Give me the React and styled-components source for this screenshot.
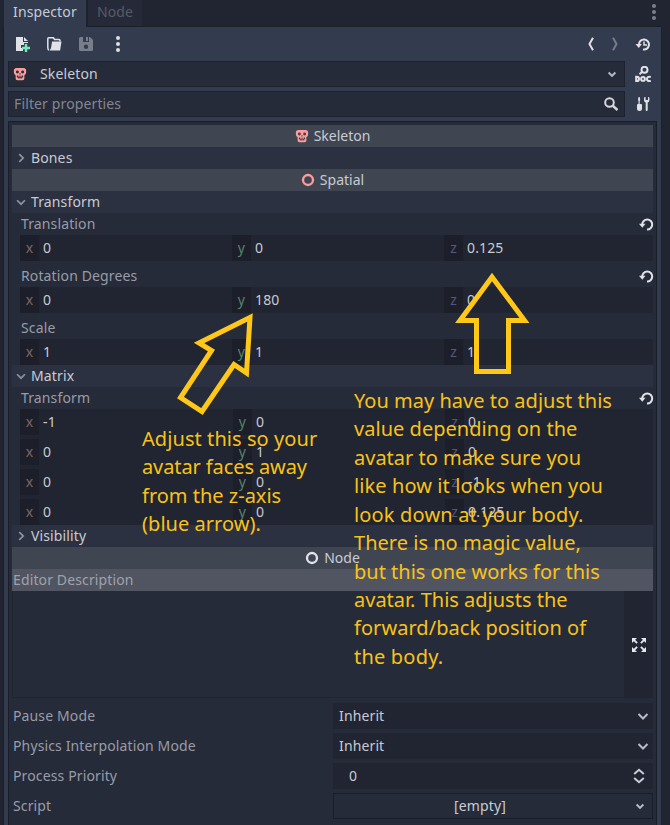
import React from "react";
import styled, { createGlobalStyle } from "styled-components";

const Global = createGlobalStyle`
  * { box-sizing: border-box; }
  body {
    margin: 0;
    background: #212531;
    color: #c8cbd4;
    font: 14px/22px "Noto Sans", "Open Sans", sans-serif;
    letter-spacing: 0.13px;
    overflow: hidden;
  }
`;

const Screen = styled.div`
  position: relative;
  width: 670px;
  height: 825px;
  overflow: hidden;
  display: flex;
  flex-direction: column;
  padding: 0 9px 0 4px;
`;

const TabBar = styled.div`
  display: flex;
  height: 27px;
  flex: none;
  background: linear-gradient(#212531 26px, #1b1f2a 26px);
`;

const Tab = styled.div`
  width: ${(p) => p.$width}px;
  height: ${(p) => (p.$active ? 27 : 26)}px;
  padding: 1px 0 0 9px;
  background: ${(p) => (p.$active ? "#333b4f" : "#262a38")};
  color: ${(p) => (p.$active ? "#c8cbd4" : "#575b67")};
  border-right: ${(p) => (p.$active ? "2px solid #1d212c" : "0")};
`;

const TabMenu = styled.div`
  margin: 0 -1px 0 auto;
  padding-top: 4px;
`;

const Dock = styled.div`
  flex: 1;
  min-height: 0;
  display: flex;
  flex-direction: column;
  background: #333b4f;
  box-shadow: -1px 0 #191d28, 1px 0 #1b202c;
  padding: 0 4px;
`;

const Toolbar = styled.div`
  height: 34px;
  flex: none;
  display: flex;
  align-items: center;
  gap: 16px;
  padding: 0 6px 0 6px;
`;

const Push = styled.div`
  margin-left: auto;
  display: flex;
  align-items: center;
  gap: ${(p) => p.$gap || 0}px;
  margin-right: ${(p) => (p.$gap ? -4 : 0)}px;
`;

const FieldRow = styled.div`
  display: flex;
  height: 26px;
  flex: none;
  margin-bottom: 4px;
`;

const Field = styled.div`
  width: 617px;
  height: 26px;
  display: flex;
  align-items: center;
  padding: 0 ${(p) => p.$right}px 0 ${(p) => (p.$muted ? 5 : 4)}px;
  gap: 13px;
  background: #262b3a;
  border: 1px solid #1e2230;
  color: ${(p) => (p.$muted ? "#838692" : "#c8cbd4")};
`;

const SideIcon = styled.div`
  flex: 1;
  display: flex;
  align-items: center;
  justify-content: center;
  padding-left: 3px;
`;

const Properties = styled.div`
  flex: 1;
  min-height: 0;
  background: #262b3a;
  border: 1px solid #191e29;
  border-bottom: 0;
  padding: 3px 3px 0;
`;

const Category = styled.div`
  height: 22px;
  display: flex;
  justify-content: center;
  align-items: center;
  gap: 5px;
  background: #404552;
  letter-spacing: 0;
`;

const Section = styled.div`
  height: 22px;
  display: flex;
  align-items: center;
  gap: 3px;
  padding-left: 2px;
  background: #2c3141;
`;

const Caption = styled.div`
  height: 22px;
  display: flex;
  justify-content: space-between;
  align-items: center;
  padding: 0 0 0 9px;
  color: #999ca7;
  & > svg { margin-right: -1px; }
`;

const Vector = styled.div`
  height: 26px;
  margin: 0 0 ${(p) => p.$gap}px 8px;
  display: grid;
  grid-template-columns: ${(p) => (p.$wide ? "213px 212px 1fr" : "212px 212px 1fr")};
  background: #212531;
`;

const Matrix = styled.div`
  background: linear-gradient(90deg, transparent 8px, #212531 8px);
  & > *:last-child { margin-bottom: 0; }
`;

const Component = styled.div`
  display: flex;
  align-items: center;
`;

const axisColors = { x: "#806462", y: "#56846c", z: "#55567f" };

const Axis = styled.div`
  width: 19px;
  height: 26px;
  line-height: 26px;
  text-align: center;
  background: #1c1f2a;
  color: ${(p) => axisColors[p.$axis]};
  margin-right: 4px;
`;

const Description = styled.div`
  height: 22px;
  padding-left: 1px;
  background: #515561;
  color: #9fa2ac;
`;

const TextArea = styled.div`
  height: 107px;
  display: flex;
  justify-content: flex-end;
  border: solid #212532;
  border-width: 0 0 1px 1px;
`;

const Expand = styled.div`
  width: 29px;
  padding-top: 2px;
  display: flex;
  align-items: center;
  justify-content: center;
  background: #212531;
`;

const PropertyRow = styled.div`
  height: 26px;
  margin: ${(p) => (p.$first ? 5 : 4)}px 0 0;
  display: grid;
  grid-template-columns: 320px 1fr;
  align-items: center;
  color: #999ca7;
  padding-left: 1px;
`;

const Control = styled.div`
  height: 26px;
  display: flex;
  align-items: center;
  justify-content: space-between;
  padding: 0 ${(p) => p.$right}px 0 ${(p) => p.$left}px;
  background: ${(p) => (p.$outlined ? "#262b3a" : "#212531")};
  border: ${(p) => (p.$outlined ? "1px solid #191d29" : "0")};
  color: #c8cbd4;
`;

const Centered = styled.span`
  flex: 1;
  text-align: center;
  padding-right: 8px;
`;

const Note = styled.div`
  position: absolute;
  left: ${(p) => p.$x}px;
  top: ${(p) => p.$y}px;
  color: #f8c21b;
  font-size: 20px;
  line-height: 28.42px;
  letter-spacing: 0;
  white-space: nowrap;
`;

const NoteLine = styled.div`
  letter-spacing: ${(p) => p.$track || 0}px;
`;

const Arrows = styled.svg`
  position: absolute;
  inset: 0;
  pointer-events: none;
`;

const Svg = styled.svg`
  display: block;
  flex: none;
`;

const Icon = ({ size = 16, children, ...rest }) => (
  <Svg width={size} height={size} viewBox="0 0 16 16" fill="none" {...rest}>
    {children}
  </Svg>
);

const Dots = ({ color = "#e0e0e3" }) => (
  <Icon fill={color}>
    <circle cx="8" cy="2" r="2" />
    <circle cx="8" cy="8" r="2" />
    <circle cx="8" cy="14" r="2" />
  </Icon>
);

const NewFile = () => (
  <Icon>
    <path d="M2 1v14h7v-3H7V9h3V7h4V6H9V1zm8 0v4h4z" fill="#e0e2e8" />
    <path d="M10.800 8h2.400v2.800H16v2.400h-2.800V16h-2.400v-2.800H8v-2.400h2.800z" fill="#77e9b8" />
  </Icon>
);

const Folder = () => (
  <Icon>
    <path d="M14 5.500V4.500q0-1-1-1H8.500l-1-1.700H2.800q-1 0-1 1V11.500q0 2 1.200 2.500" stroke="#e0e2e8" strokeWidth="1.500" />
    <path d="M6 5.500h9.500l-1.400 9H3.400Q5 13.500 5.200 11z" fill="#e0e2e8" />
  </Icon>
);

const Save = () => (
  <Icon>
    <path fillRule="evenodd" d="M2.500 1H5v5h6V1h1l3 3v9.500q0 1.500-1.500 1.500h-11Q1 15 1 13.500v-11Q1 1 2.500 1zM8 8.500a2.200 2.200 0 1 0 0 4.400 2.200 2.200 0 0 0 0-4.400z" fill="#797e8b" />
    <path d="M8 1h2v4H8z" fill="#797e8b" />
  </Icon>
);

const Skull = () => (
  <Icon size={14}>
    <path fillRule="evenodd" fill="#fc9c9c" d="M4 1h8q3 0 3 3v2q0 3-2 3.500V13q0 2-2 2H5q-2 0-2-2V9.500Q1 9 1 6V4q0-3 3-3zM5 4a1.700 1.700 0 1 0 0 3.400A1.700 1.700 0 0 0 5 4zm6 0a1.700 1.700 0 1 0 0 3.400A1.700 1.700 0 0 0 11 4zM7.300 7v1.500h1.400V7zM4.500 9.700V12H6v1h1.500v-1h1v1H10v-1h1.500V9.700H10V11H8.500V9.700h-1V11H6V9.700z" />
  </Icon>
);

const Ring = ({ color }) => (
  <Icon size={14}>
    <circle cx="8" cy="8" r="5.700" stroke={color} strokeWidth="2.700" />
  </Icon>
);

const Chevron = ({ dir = "down", size = 12, color = "#b9bcc6", weight = 2 }) => {
  const d = {
    down: "M3.500 6l4.500 4.500L12.500 6",
    right: "M6 3.500L10.500 8 6 12.500",
    tallLeft: "M10 1.800L6.500 8l3.500 6.200",
    tallRight: "M6 1.800L9.500 8 6 14.200",
  }[dir];
  return (
    <Icon size={size} stroke={color} strokeWidth={weight}>
      <path d={d} />
    </Icon>
  );
};

const History = () => (
  <Icon>
    <path d="M4 8.500a5 5 0 1 1 4 4.900" stroke="#e0e2e8" strokeWidth="2" />
    <path d="M.500 8h6.400l-3.200 4z" fill="#e0e2e8" />
    <path d="M9 5.500V9h3" stroke="#e0e2e8" strokeWidth="1.500" />
  </Icon>
);

const Doc = () => (
  <Icon stroke="#e0e2e8" strokeWidth="2">
    <circle cx="9.500" cy="3.800" r="3" />
    <path d="M7.300 5.800L4.500 8.200" />
    <path d="M1.200 10.800v4.200h.8q2 0 2-2.100t-2-2.100z" />
    <circle cx="8" cy="12.900" r="1.900" />
    <path d="M15.800 10.900Q12 10.200 12 12.900t3.800 2" />
  </Icon>
);

const Tools = () => (
  <Icon>
    <path d="M3.500 1h1.200L5.200 4l-.5 1v3H6q1 0 1 1v3.500Q7 15 4.500 15T2 12.500V9q0-1 1-1h.5V5L3 4z" fill="#e0e2e8" />
    <path d="M9 1.500v2.800q0 1.700 1.700 2.200V14q0 1 1 1t1-1V6.500q1.700-.5 1.700-2.200V1.500L13 1v3h-2.400V1z" fill="#e0e2e8" />
  </Icon>
);

const Search = () => (
  <Icon stroke="#d4d6dd" strokeWidth="2">
    <circle cx="6.500" cy="6.500" r="4.300" />
    <path d="M9.500 9.500l5 4.500" strokeWidth="2.400" />
  </Icon>
);

const Revert = () => (
  <Icon>
    <path d="M4.200 8.500a5 5 0 1 1 4.800 5" stroke="#e0e2e8" strokeWidth="2" />
    <path d="M1 7.700h6.500l-3.200 4z" fill="#e0e2e8" />
  </Icon>
);

const Fullscreen = () => (
  <Icon fill="#e6e8ee" stroke="#e6e8ee" strokeWidth="1.800">
    {[0, 90, 180, 270].map((a) => (
      <g key={a} transform={`rotate(${a} 8 8)`}>
        <path d="M1 1h5L1 6z" stroke="none" />
        <path d="M2.500 2.500l3.600 3.600" />
      </g>
    ))}
  </Icon>
);

const Spinner = () => (
  <Icon stroke="#c9ccd5" strokeWidth="2">
    <path d="M3.200 6L8 1.800 12.800 6M3.200 10L8 14.200 12.800 10" />
  </Icon>
);

const VectorField = ({ values, gap = 4, wide = false }) => (
  <Vector $gap={gap} $wide={wide}>
    {["x", "y", "z"].map((axis, i) => (
      <Component key={axis}>
        <Axis $axis={axis}>{axis}</Axis>
        {values[i]}
      </Component>
    ))}
  </Vector>
);

const matrix = [
  ["-1", "0", "0"],
  ["0", "1", "0"],
  ["0", "0", "-1"],
  ["0", "0", "0.125"],
];

const leftNote = [
  ["Adjust this so your", 0.07],
  ["avatar faces away", -0.1],
  ["from the z-axis", 0],
  ["(blue arrow).", 0.04],
];

const rightNote = [
  ["You may have to adjust this", 0.02],
  ["value depending on the", 0.03],
  ["avatar to make sure you", 0],
  ["like how it looks when you", 0.1],
  ["look down at your body.", 0.17],
  ["There is no magic value,", 0.02],
  ["but this one works for this", 0],
  ["avatar. This adjusts the", 0],
  ["forward/back position of", 0.05],
  ["the body.", 0.2],
];

const NoteBlock = ({ x, y, lines }) => (
  <Note $x={x} $y={y}>
    {lines.map(([text, track]) => (
      <NoteLine key={text} $track={track}>{text}</NoteLine>
    ))}
  </Note>
);

export default function App() {
  return (
    <Screen>
      <Global />
      <TabBar>
        <Tab $active $width={84}>Inspector</Tab>
        <Tab $width={54}>Node</Tab>
        <TabMenu><Dots color="#7c7f89" /></TabMenu>
      </TabBar>
      <Dock>
        <Toolbar>
          <NewFile />
          <Folder />
          <Save />
          <Dots />
          <Push $gap={8}>
            <Chevron dir="tallLeft" size={16} color="#e0e2e8" />
            <Chevron dir="tallRight" size={16} color="#777c8a" />
          </Push>
          <History />
        </Toolbar>
        <FieldRow>
          <Field $right={6}>
            <Skull />
            Skeleton
            <Push><Chevron weight={2.6} /></Push>
          </Field>
          <SideIcon><Doc /></SideIcon>
        </FieldRow>
        <FieldRow>
          <Field $muted $right={5}>
            Filter properties
            <Push><Search /></Push>
          </Field>
          <SideIcon><Tools /></SideIcon>
        </FieldRow>
        <Properties>
          <Category><Skull />Skeleton</Category>
          <Section><Chevron dir="right" size={14} color="#8e919d" />Bones</Section>
          <Category><Ring color="#fc9c9c" />Spatial</Category>
          <Section><Chevron size={14} color="#8e919d" />Transform</Section>
          <Caption>Translation<Revert /></Caption>
          <VectorField values={["0", "0", "0.125"]} />
          <Caption>Rotation Degrees<Revert /></Caption>
          <VectorField values={["0", "180", "0"]} />
          <Caption>Scale</Caption>
          <VectorField values={["1", "1", "1"]} gap={0} />
          <Section><Chevron size={14} color="#8e919d" />Matrix</Section>
          <Caption>Transform<Revert /></Caption>
          <Matrix>
            {matrix.map((row, i) => <VectorField key={i} values={row} wide />)}
          </Matrix>
          <Section><Chevron dir="right" size={14} color="#8e919d" />Visibility</Section>
          <Category><Ring color="#e0e2e8" />Node</Category>
          <Description>Editor Description</Description>
          <TextArea><Expand><Fullscreen /></Expand></TextArea>
          <PropertyRow $first>
            Pause Mode
            <Control $left={6} $right={2}>Inherit<Chevron size={16} /></Control>
          </PropertyRow>
          <PropertyRow>
            Physics Interpolation Mode
            <Control $left={6} $right={2}>Inherit<Chevron size={16} /></Control>
          </PropertyRow>
          <PropertyRow>
            Process Priority
            <Control $left={16} $right={6}>0<Spinner /></Control>
          </PropertyRow>
          <PropertyRow>
            Script
            <Control $outlined $left={0} $right={6}>
              <Centered>[empty]</Centered>
              <Chevron weight={2.6} />
            </Control>
          </PropertyRow>
        </Properties>
      </Dock>
      <Arrows width="670" height="825" fill="none" stroke="#ffc819" strokeWidth="5">
        <path d="M250 317.500L199 343l12.500 7.500L180.500 397.500l21.500 14L234 364.500l12.500 8.500z" />
        <path d="M492 277L460 320.500h16.500v51h32v-51H524.500z" />
      </Arrows>
      <NoteBlock x={142} y={425} lines={leftNote} />
      <NoteBlock x={354} y={387} lines={rightNote} />
    </Screen>
  );
}
